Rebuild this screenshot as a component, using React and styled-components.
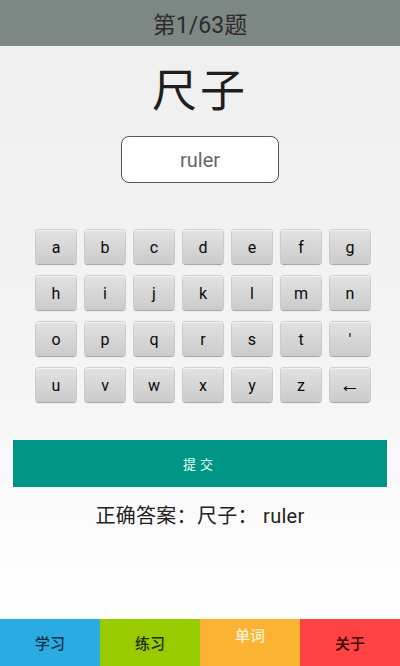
import React, { useState } from 'react';
import styled, { createGlobalStyle } from 'styled-components';

const GlobalStyle = createGlobalStyle`
  html, body {
    margin: 0;
    padding: 0;
  }
  body {
    font-family: Roboto, "Noto Sans CJK SC", sans-serif;
  }
`;

const Page = styled.div`
  width: 400px;
  height: 666px;
  display: flex;
  flex-direction: column;
  align-items: center;
  background: linear-gradient(#efefef 0%, #f3f3f3 50%, #ffffff 92%);
  overflow: hidden;
`;

const Header = styled.div`
  align-self: stretch;
  height: 46px;
  background-color: #7d8783;
  display: flex;
  align-items: center;
  justify-content: center;
  font-size: 23px;
  color: #2c2c2c;
`;

const Word = styled.div`
  margin-top: 18px;
  font-size: 45px;
  line-height: 56px;
  color: #1e1e1e;
  letter-spacing: 3px;
`;

const AnswerBox = styled.div`
  margin-top: 16px;
  width: 156px;
  height: 45px;
  border: 1px solid #555;
  border-radius: 8px;
  background: #fff;
  display: flex;
  align-items: center;
  justify-content: center;
  font-size: 20px;
  color: #666;
`;

const Keyboard = styled.div`
  margin-top: 47px;
  margin-left: 6px;
  display: grid;
  grid-template-columns: repeat(7, 40px);
  grid-auto-rows: 34px;
  column-gap: 9px;
  row-gap: 12px;
`;

const Key = styled.button`
  border: none;
  border-radius: 3px;
  padding: 0;
  background: linear-gradient(#e2e2e2, #cbcbcb);
  box-shadow: inset 0 1px 0 #f2f2f2, 0 1px 1px #a5a5a5, 0 0 0 1px #d0d0d0;
  font-family: Roboto, sans-serif;
  font-size: ${(props) => (props.wide ? '21px' : '16px')};
  color: #0a0a0a;
  display: flex;
  align-items: center;
  justify-content: center;
  cursor: pointer;
`;

const Submit = styled.button`
  margin-top: 38px;
  align-self: stretch;
  margin-left: 13px;
  margin-right: 13px;
  height: 47px;
  border: none;
  background-color: #009685;
  color: #e8fbf8;
  font-family: "Noto Sans CJK SC", sans-serif;
  font-size: 13px;
  letter-spacing: 4px;
  cursor: pointer;
`;

const Result = styled.div`
  margin-top: 15px;
  font-size: 20px;
  line-height: 28px;
  color: #222;
  letter-spacing: 0.3px;
`;

const Spacer = styled.div`
  flex: 1;
`;

const Nav = styled.div`
  align-self: stretch;
  height: 47px;
  display: grid;
  grid-template-columns: repeat(4, 1fr);
`;

const Tab = styled.div`
  background-color: ${(props) => props.bg};
  color: ${(props) => props.fg};
  font-family: "Noto Sans CJK SC", sans-serif;
  font-size: 15px;
  font-weight: 500;
  display: flex;
  justify-content: center;
  align-items: ${(props) => (props.raised ? 'flex-start' : 'center')};
  padding-top: ${(props) => (props.raised ? '5px' : '0')};
  box-sizing: border-box;
`;

const keys = [
  'a', 'b', 'c', 'd', 'e', 'f', 'g',
  'h', 'i', 'j', 'k', 'l', 'm', 'n',
  'o', 'p', 'q', 'r', 's', 't', "'",
  'u', 'v', 'w', 'x', 'y', 'z', '←',
];

const tabs = [
  { label: '学习', bg: '#2aabe2', fg: '#0c2f47' },
  { label: '练习', bg: '#99cc00', fg: '#1c2d00' },
  { label: '单词', bg: '#fcb334', fg: '#fff3d6', raised: true },
  { label: '关于', bg: '#ff4343', fg: '#3a0000' },
];

const App = () => {
  const [answer, setAnswer] = useState('ruler');

  const press = (k) => {
    if (k === '←') {
      setAnswer(answer.slice(0, -1));
    } else {
      setAnswer(answer + k);
    }
  };

  return (
    <>
      <GlobalStyle />
      <Page>
        <Header>第1/63题</Header>
        <Word>尺子</Word>
        <AnswerBox>{answer}</AnswerBox>
        <Keyboard>
          {keys.map((k) => (
            <Key key={k} wide={k === '←'} onClick={() => press(k)}>
              {k}
            </Key>
          ))}
        </Keyboard>
        <Submit>提交</Submit>
        <Result>正确答案：尺子： ruler</Result>
        <Spacer />
        <Nav>
          {tabs.map((t) => (
            <Tab key={t.label} bg={t.bg} fg={t.fg} raised={t.raised}>
              {t.label}
            </Tab>
          ))}
        </Nav>
      </Page>
    </>
  );
};

export default App;
